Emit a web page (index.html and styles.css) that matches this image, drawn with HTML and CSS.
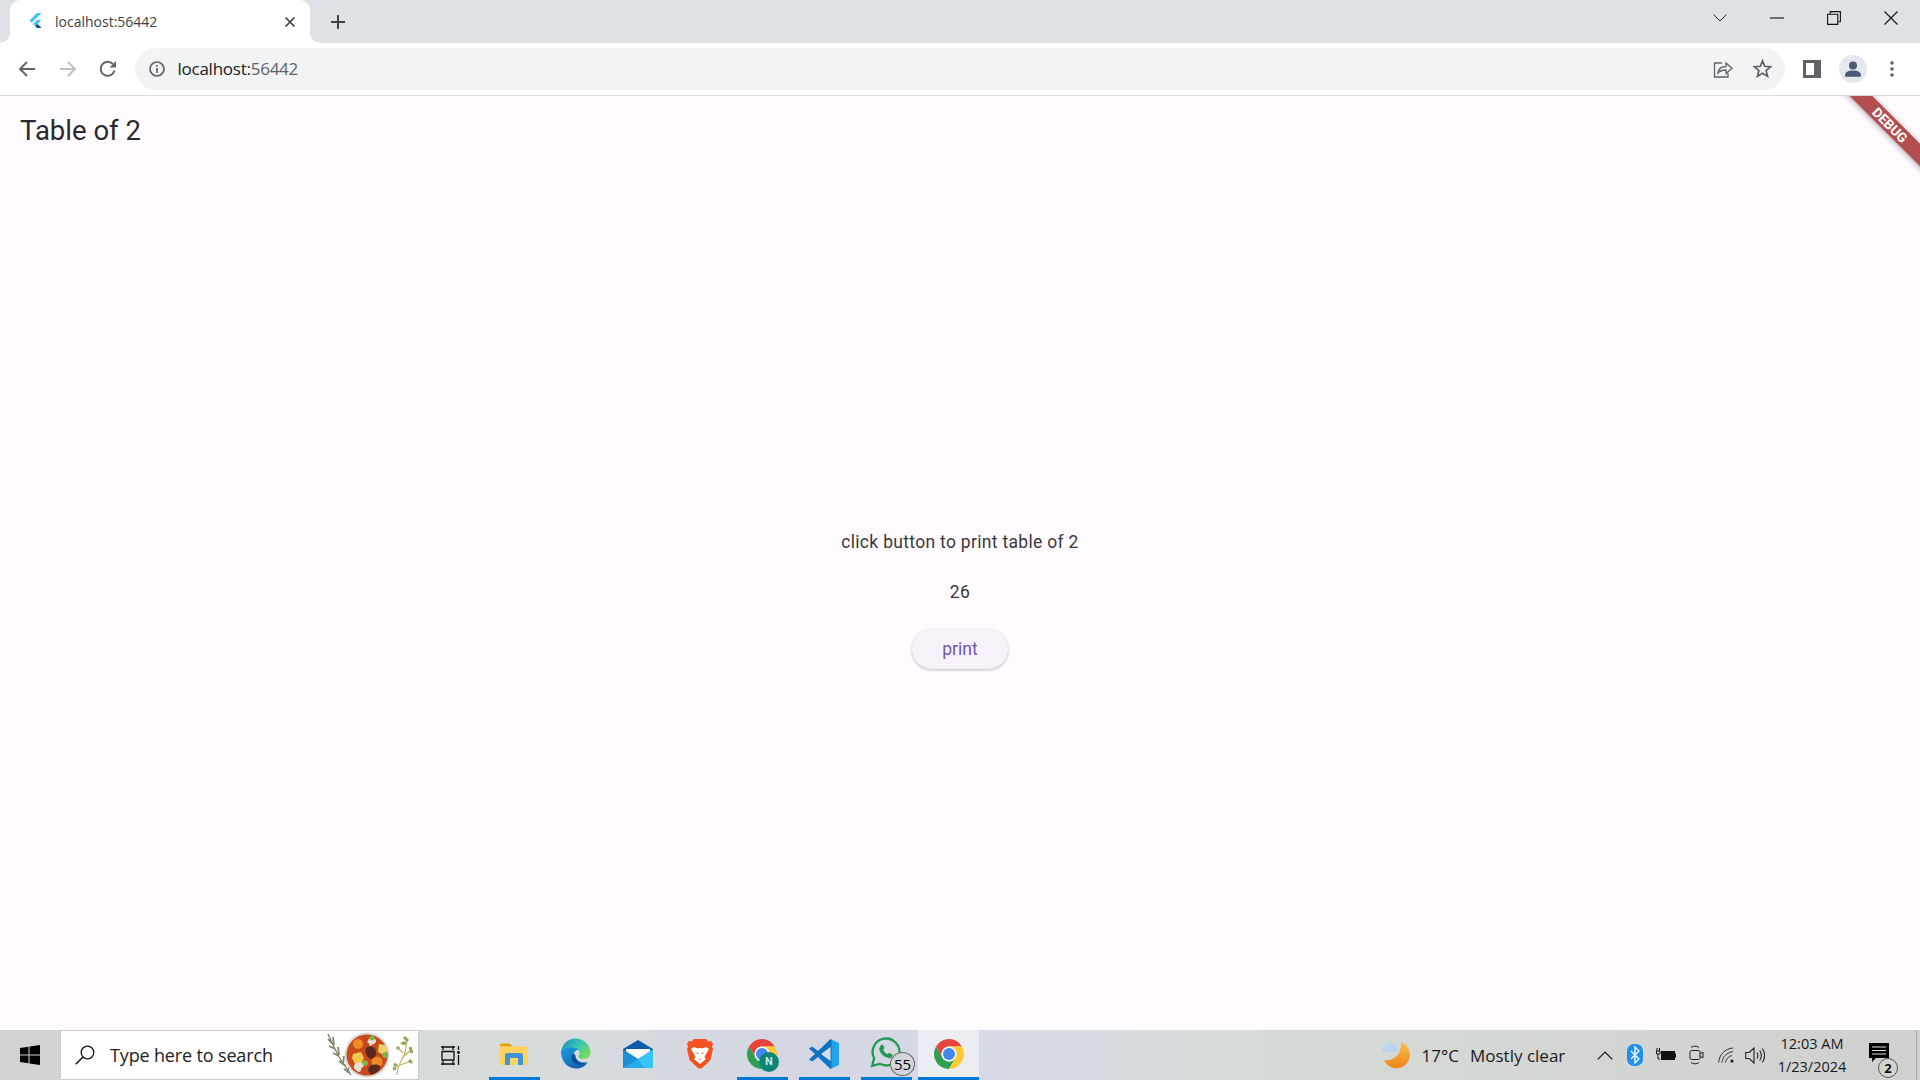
FILE: index.html
```html
<!DOCTYPE html>
<html lang="en">
<head>
<meta charset="utf-8">
<title>localhost:56442</title>
<link rel="stylesheet" href="styles.css">
</head>
<body>
<header class="tabstrip">
  <div class="tab">
    <svg class="favicon" viewBox="0 0 24 24" width="15" height="15"><path fill="#42c5f5" d="M14.3 0 2.3 12 6 15.7 21.7 0z"/><path fill="#42c5f5" d="M14.3 11 7.9 17.5l3.7 3.7 10.1-10.2z"/><path fill="#0a4f94" d="M11.6 21.2 14.3 24h7.4l-6.5-6.5z"/></svg>
    <span class="tab-title">localhost:56442</span>
    <svg class="tab-close" viewBox="0 0 12 12" width="12" height="12"><path d="M1.5 1.5l9 9M10.5 1.5l-9 9" stroke="#3c4043" stroke-width="1.7" fill="none"/></svg>
  </div>
  <svg class="new-tab" viewBox="0 0 16 16" width="16" height="16"><path d="M8 1v14M1 8h14" stroke="#3c4043" stroke-width="2" fill="none"/></svg>
  <div class="strip-space"></div>
  <div class="caption">
    <svg viewBox="0 0 14 8" width="14" height="8"><path d="M.5.5 7 7l6.500-6.500" stroke="#222" fill="none"/></svg>
  </div>
  <div class="caption">
    <svg viewBox="0 0 14 2" width="14" height="2"><path d="M0 1h14" stroke="#111" stroke-width="1.100" fill="none"/></svg>
  </div>
  <div class="caption">
    <svg viewBox="0 0 14 14" width="14" height="14"><path d="M.6 3.200h10.200v10.200H.6zM3.200 3V.6h10.200v10.200H11" stroke="#111" stroke-width="1.100" fill="none"/></svg>
  </div>
  <div class="caption">
    <svg viewBox="0 0 14 14" width="14" height="14"><path d="M.5.5l13 13M13.500.5l-13 13" stroke="#111" stroke-width="1.100" fill="none"/></svg>
  </div>
</header>

<nav class="toolbar">
  <div class="tool">
    <svg viewBox="0 0 18 18" width="18" height="18"><path d="M17 9H2M9 2 2 9l7 7" stroke="#5f6368" stroke-width="1.900" fill="none"/></svg>
  </div>
  <div class="tool">
    <svg viewBox="0 0 18 18" width="18" height="18"><path d="M1 9h15M9 2l7 7-7 7" stroke="#bdc1c6" stroke-width="1.900" fill="none"/></svg>
  </div>
  <div class="tool tool-reload">
    <svg viewBox="0 0 18 18" width="18" height="18"><path d="M15.500 10.500A7 7 0 1 1 14 4.200" stroke="#5f6368" stroke-width="1.900" fill="none"/><path d="M17 1v6.500h-6.500z" fill="#5f6368"/></svg>
  </div>
  <div class="omnibox">
    <svg class="info" viewBox="0 0 16 16" width="16" height="16"><circle cx="8" cy="8" r="7" stroke="#5f6368" stroke-width="1.700" fill="none"/><path d="M8 7v5" stroke="#5f6368" stroke-width="1.700"/><circle cx="8" cy="4.800" r="1" fill="#5f6368"/></svg>
    <span class="url"><span class="url-host">localhost:</span><span class="url-port">56442</span></span>
    <div class="omni-space"></div>
    <div class="omni-btn">
      <svg viewBox="0 0 20 18" width="20" height="18"><path d="M9 3H1.500v14H15v-4" stroke="#5f6368" stroke-width="1.300" fill="none"/><path d="M5 13c.5-4 3.500-6.500 8-6.500V3l6 5.300-6 5.200V10c-3.500 0-6 .8-8 3z" stroke="#5f6368" stroke-width="1.300" fill="none"/></svg>
    </div>
    <div class="omni-btn">
      <svg viewBox="0 0 20 20" width="19" height="19"><path d="M10 2l2.300 5.700 6.200.5-4.700 4 1.500 6L10 15l-5.300 3.200 1.500-6-4.700-4 6.200-.5z" stroke="#5f6368" stroke-width="1.800" fill="none"/></svg>
    </div>
  </div>
  <div class="tool tool-panel">
    <svg viewBox="0 0 18 18" width="18" height="18"><path d="M0 0h18v18H0z" fill="#5f6368"/><path d="M3 3h8v12H3z" fill="#fff"/></svg>
  </div>
  <div class="tool tool-avatar">
    <svg viewBox="0 0 28 28" width="28" height="28"><circle cx="14" cy="14" r="14" fill="#e4e7ec"/><circle cx="14" cy="10.500" r="4" fill="#4a5a74"/><path d="M6 21c0-4 3-5.500 8-5.500s8 1.500 8 5.500c0 .5-.5.800-1 .800H7c-.5 0-1-.3-1-.8z" fill="#4a5a74"/></svg>
  </div>
  <div class="tool tool-menu">
    <svg viewBox="0 0 4 16" width="4" height="16"><circle cx="2" cy="2" r="1.800" fill="#5f6368"/><circle cx="2" cy="8" r="1.800" fill="#5f6368"/><circle cx="2" cy="14" r="1.800" fill="#5f6368"/></svg>
  </div>
</nav>

<main class="app">
  <div class="appbar"><h1 class="app-title">Table of 2</h1></div>
  <section class="center">
    <p class="line">click button to print table of 2</p>
    <p class="line">26</p>
    <button class="print-btn" type="button">print</button>
  </section>
  <div class="debug-clip"><div class="debug-band">DEBUG</div></div>
</main>

<footer class="taskbar">
  <div class="start">
    <svg viewBox="0 0 20 20" width="20" height="20"><path fill="#000" d="M0 3l8.500-1.200v7.700H0zM9.500 1.600 20 0v9.500H9.500zM0 10.500h8.500v7.700L0 17zM9.500 10.500H20V20L9.500 18.400z"/></svg>
  </div>
  <div class="search">
    <svg class="search-icon" viewBox="0 0 20 20" width="20" height="20"><circle cx="12.500" cy="7.500" r="6.300" stroke="#111" stroke-width="1.300" fill="none"/><path d="M8 12 .7 19.300" stroke="#111" stroke-width="1.500"/></svg>
    <span class="search-text">Type here to search</span>
    <div class="search-space"></div>
    <svg class="soup" viewBox="0 0 90 48" width="90" height="48">
      <path d="M3 3 8 14 14 26 26 44" stroke="#8a7a62" stroke-width="1.300" fill="none"/>
      <path d="M3 8l4 4M8 6l1 8M4 15l6 3M13 16l1 8M8 22l6 3M19 25l-1 9M14 30l7 5M24 34l-1 8M19 38l6 4" stroke="#7d8a68" stroke-width="1.800" fill="none"/>
      <circle cx="42" cy="24" r="22.500" fill="#d8d8d8"/>
      <circle cx="42" cy="24" r="20.500" fill="#c9491a"/>
      <circle cx="33" cy="13" r="5" fill="#f08a28"/>
      <circle cx="52" cy="31" r="5.500" fill="#f08a28"/>
      <path d="M44 8c3-2 7-1 7 2s-4 3-5 5c-2 0-2-2-2-3-2 0-2-2 0-4z" fill="#e9e0d0"/>
      <path d="M28 17l8-2 3 6-3 6-6 0-3-6z" fill="#f0c850" transform="translate(0 6)"/>
      <path d="M54 13l6 1 3 5-4 5-6-3z" fill="#f0d068"/>
      <path d="M42 16c4-2 9 0 9 5 1 5-4 8-7 6s-5-8-2-11z" fill="#5a2a20"/>
      <path d="M44 36c3-3 9-3 11-1 1 3-3 7-7 8-4 1-6-4-4-7z" fill="#5a2a20"/>
      <path d="M30 33c3-2 8-2 9 1 0 2-3 2-3 5 0 3-4 2-5 0-2-1-3-4-1-6z" fill="#e9e0d0"/>
      <circle cx="60" cy="24" r="2.800" fill="#7ab648"/>
      <circle cx="40" cy="32" r="2.800" fill="#7ab648"/>
      <circle cx="47" cy="7" r="2.500" fill="#7ab648"/>
      <path d="M72 44 C72 34 78 28 80 22 M80 22l2-12M75 34l9-3M78 26l7-6M78 22l-6-6M74 36l-5-3M80 14l-5-2" stroke="#c0b060" stroke-width="1.200" fill="none"/>
      <path d="M69 33l3 2M72 16l2 2M77 12l4 0M79 6l4 4M85 16l2 6M84 29l3 3M68 37l3 1" stroke="#8ea85a" stroke-width="3" fill="none"/>
    </svg>
  </div>
  <div class="taskview">
    <svg viewBox="0 0 20 19" width="20" height="19"><path d="M3 0v4M13 0v4M0 0M1 1h14M1 18h14M3 15v4M13 15v4M2 5.500h12v8.500H2zM18.500 0v4M18.500 9v10" stroke="#111" stroke-width="1.300" fill="none"/><circle cx="18.500" cy="6.500" r="1.400" fill="#111"/></svg>
  </div>
  <div class="tile">
    <div class="tile-icon">
      <svg viewBox="0 0 28 24" width="28" height="24"><path d="M0 3a1.500 1.500 0 0 1 1.500-1.500h8L13 4.500H0z" fill="#e0a100"/><path d="M0 4.500h26.500a1.500 1.500 0 0 1 1.500 1.500v15.500a1.500 1.500 0 0 1-1.500 1.500H1.500A1.500 1.500 0 0 1 0 21.500z" fill="#ffd25e"/><path d="M7 11h14a2 2 0 0 1 2 2v10h-5v-7h-8v7H5V13a2 2 0 0 1 2-2z" fill="#3f93d6"/></svg>
    </div>
    <div class="underline"></div>
  </div>
  <div class="tile">
    <div class="tile-icon">
      <svg class="edge-icon" viewBox="0 0 32 32" width="31" height="31"><defs><linearGradient id="edgeTop" x1="0" y1="0" x2="1" y2=".6"><stop offset="0" stop-color="#1a8fc8"/><stop offset=".6" stop-color="#3cc6b0"/><stop offset="1" stop-color="#73dc5a"/></linearGradient><linearGradient id="edgeLow" x1="0" y1="0" x2=".7" y2="1"><stop offset="0" stop-color="#1b9ee0"/><stop offset="1" stop-color="#0f5fb0"/></linearGradient></defs><path d="M1 15C2 6 8 .5 16 .5 25 .5 31.500 7.500 31.500 15c0 4-3 6.500-7 6.500-3.500 0-6-1-5.500-3 2-2 1.500-5-.5-6.500C14 9 7 10 4 14z" fill="url(#edgeTop)"/><path d="M1 14c0 9 6 17.500 15.500 17.500 5.500 0 9.500-2.500 12-6-3 1.500-7 2-10 .5-4-2-6-6.500-4.500-10 1-2.500 3-3.500 5-4.500C13 9 4 9 1 14z" fill="url(#edgeLow)"/><path d="M12 17c-1 5 2 10 6.500 10.500 4 .5 7.500-.5 10-2.500-4 .5-8 .5-10-1.500-2-2-3-4.500-3-7z" fill="#0c4e98"/></svg>
    </div>
    <div class="underline hidden-bar"></div>
  </div>
  <div class="tile">
    <div class="tile-icon">
      <svg viewBox="0 0 30 28" width="30" height="28"><path d="M15 0 30 9v2H0V9z" fill="#0f5aa8"/><path d="M3 9h24v7L15 22 3 16z" fill="#fff"/><path d="M0 9.500 15 19 30 9.500V28H0z" fill="#29a9e8"/><path d="M30 9.500 15 19 22 28h8z" fill="#37c5f5"/><path d="M15 19 0 9.500V28z" fill="#1b8ed6"/></svg>
    </div>
    <div class="underline hidden-bar"></div>
  </div>
  <div class="tile">
    <div class="tile-icon">
      <svg viewBox="0 0 26 30" width="26" height="30"><path d="M7 0h12l2.500 2.500L24 2l2 2.500-1 3.500 1 2-2.500 11L15 29c-1 .8-3 .8-4 0l-8.500-8L0 10l1-2L0 4.500 2 2l2.500.5z" fill="#f5501f"/><path d="M7 8l4 1.500 2-.8 2 .8L19 8l3 2-3 5-1.500 3 1.500 2-6 5-6-5 1.500-2L7 15 4 10z" fill="#fff"/><path d="M9 13l2.500 1L11 15.500zM17 13l-2.500 1 .5 1.500zM11 19l2 1 2-1-2 2z" fill="#f5501f"/></svg>
    </div>
    <div class="underline hidden-bar"></div>
  </div>
  <div class="tile">
    <div class="tile-icon">
      <svg viewBox="0 0 48 48" width="36" height="36"><path fill="#e6433a" d="M6.680 14A20 20 0 0 1 41.320 14H24A10 10 0 0 0 15.340 29z"/><path fill="#2f9e4f" d="M6.680 14A20 20 0 0 0 24 44L32.660 29A10 10 0 0 1 15.340 29z"/><path fill="#fcc934" d="M41.320 14A20 20 0 0 1 24 44L32.660 29A10 10 0 0 0 24 14z"/><circle cx="24" cy="24" r="10" fill="#fff"/><circle cx="24" cy="24" r="8" fill="#4285f4"/></svg>
      <span class="n-badge">N</span>
    </div>
    <div class="underline"></div>
  </div>
  <div class="tile">
    <div class="tile-icon">
      <svg viewBox="0 0 30 30" width="30" height="30"><path d="M21.500 0 30 4v22l-8.500 4L21.500 0z" fill="#20a5ee"/><path d="M21.500 0 9 12 3 7.500 0 9.500 6 15 0 20.500l3 2L9 18l12.500 12 1-1V1z" fill="#0b75c4"/><path d="M21.500 8v14L12 15z" fill="#d8dce6"/></svg>
    </div>
    <div class="underline"></div>
  </div>
  <div class="tile">
    <div class="tile-icon">
      <svg class="wa-icon" viewBox="0 0 30 30" width="31" height="31"><path d="M2 28l2-7.500A13 13 0 1 1 9.500 26z" fill="none" stroke="#1f9a55" stroke-width="2.200"/><path d="M10.500 8c1-1 2-.8 2.500.5l.8 2c.2.700-.5 1.400-1 2 .8 1.800 2.300 3.200 4.200 4 .6-.5 1.300-1.200 2-1l2 1c1 .5 1 1.500.3 2.500-1 1.300-2.800 1.800-4.500 1.200-3.500-1.200-6-3.700-7.500-7-.6-1.800-.1-3.600 1.200-4.700z" fill="#1f9a55"/></svg>
      <span class="wa-badge">55</span>
    </div>
    <div class="underline"></div>
  </div>
  <div class="tile tile-active">
    <div class="tile-icon">
      <svg viewBox="0 0 48 48" width="36" height="36"><path fill="#e6433a" d="M6.680 14A20 20 0 0 1 41.320 14H24A10 10 0 0 0 15.340 29z"/><path fill="#2f9e4f" d="M6.680 14A20 20 0 0 0 24 44L32.660 29A10 10 0 0 1 15.340 29z"/><path fill="#fcc934" d="M41.320 14A20 20 0 0 1 24 44L32.660 29A10 10 0 0 0 24 14z"/><circle cx="24" cy="24" r="10" fill="#fff"/><circle cx="24" cy="24" r="8" fill="#4285f4"/></svg>
    </div>
    <div class="underline underline-full"></div>
  </div>
  <div class="task-space"></div>
  <div class="weather">
    <svg viewBox="0 0 30 28" width="30" height="28"><defs><linearGradient id="moon" x1="0" y1="0" x2="0" y2="1"><stop offset="0" stop-color="#fcc24a"/><stop offset="1" stop-color="#ee8418"/></linearGradient></defs><path d="M19 1a13.500 13.500 0 1 1-17 18c8 1.500 18-4 17-18z" fill="url(#moon)"/><path d="M3 11a3.500 3.500 0 0 1 0-7 5 5 0 0 1 9-1 3.500 3.500 0 0 1 3 3.500A3.500 3.500 0 0 1 14 11z" fill="#bcd4ee"/></svg>
    <span class="temp">17°C</span>
    <span class="sky">Mostly clear</span>
  </div>
  <div class="tray">
    <svg class="tray-chevron" viewBox="0 0 16 9" width="16" height="9"><path d="M.7 8.300 8 1l7.300 7.300" stroke="#111" stroke-width="1.200" fill="none"/></svg>
    <svg class="tray-bt" viewBox="0 0 16 22" width="16" height="22"><rect width="16" height="22" rx="7" fill="#1e90f0"/><path d="M4 7l8 8-4 4V3l4 4-8 8" stroke="#fff" stroke-width="1.300" fill="none"/></svg>
    <svg class="tray-batt" viewBox="0 0 20 14" width="20" height="14"><path d="M1 0v3M3.500 0v3M.5 3h3.500v3H.5zM2 6v5h2" stroke="#111" stroke-width="1"  fill="none"/><rect x="5" y="3" width="14" height="9" fill="#111"/><path d="M19 5.500h1v4h-1z" fill="#111"/></svg>
    <svg class="tray-meet" viewBox="0 0 15 20" width="15" height="20"><path d="M2 2.500C4 .7 8 .7 10 2.500M2 17.500c2 1.800 6 1.800 8 0" stroke="#222" fill="none"/><rect x="1" y="5.500" width="10" height="9" rx="1.500" stroke="#222" fill="none"/><path d="M11 9l3-2v6l-3-2" stroke="#222" fill="none"/></svg>
    <svg class="tray-wifi" viewBox="0 0 17 16" width="17" height="16"><path d="M.7 15.500C1 8 7 1.500 15 1M4 15.500C4.500 10 9 5 15 4.700M7.500 15.500C8 12.500 10.500 9 14 8.500" stroke="#333" fill="none"/><circle cx="14" cy="14" r="1.500" fill="#111"/></svg>
    <svg class="tray-vol" viewBox="0 0 20 17" width="20" height="17"><path d="M.7 5.500h3.500L9 1v15l-4.800-4.500H.7zM12 5.500c1.200 2 1.200 4 0 6M14.700 3.500c2 3 2 7 0 10M17.300 1.500c3 4 3 10 0 14" stroke="#222" stroke-width="1.100" fill="none"/></svg>
  </div>
  <div class="clock">
    <span>12:03 AM</span>
    <span>1/23/2024</span>
  </div>
  <div class="notify">
    <svg viewBox="0 0 20 20" width="20" height="20"><path d="M0 0h20v15H7l-4 4v-4H0z" fill="#000"/><path d="M3 4h14M3 7.500h14M3 11h14" stroke="#ddd" stroke-width="1"/></svg>
    <span class="notify-badge">2</span>
  </div>
  <div class="show-desktop"></div>
</footer>
</body>
</html>
```

FILE: styles.css
```css
* { box-sizing: border-box; }
html, body { height: 100%; }
body {
  margin: 0;
  display: flex;
  flex-direction: column;
  height: 100vh;
  overflow: hidden;
  font-family: "Roboto", "Liberation Sans", sans-serif;
  background: #fffbfe;
}
svg { display: block; flex: none; }

/* tab strip */
.tabstrip {
  height: 43px;
  flex: none;
  display: flex;
  align-items: stretch;
  padding: 0 1px 0 10px;
  background: #dee1e6;
}
.tab {
  position: relative;
  width: 300px;
  display: flex;
  align-items: center;
  padding: 0 14px 0 18px;
  background: #fff;
  border-radius: 10px 10px 0 0;
}
.tab::before, .tab::after {
  content: "";
  position: absolute;
  bottom: 0;
  width: 10px;
  height: 10px;
}
.tab::before { left: -10px; background: radial-gradient(circle at 0 0, #dee1e6 9.500px, #fff 10px); }
.tab::after { right: -10px; background: radial-gradient(circle at 100% 0, #dee1e6 9.500px, #fff 10px); }
.favicon { margin-top: -2px; }
.tab-title {
  margin-left: 12px;
  flex: 1;
  font: 14px "Open Sans", sans-serif;
  letter-spacing: 0;
  color: #3c4043;
}
.new-tab { align-self: center; margin-left: 20px; }
.strip-space { flex: 1; }
.caption {
  width: 57px;
  height: 36px;
  display: flex;
  align-items: center;
  justify-content: center;
}

/* toolbar */
.toolbar {
  height: 53px;
  flex: none;
  display: flex;
  align-items: center;
  padding: 0 8px 1px 7px;
  background: #fff;
  border-bottom: 1px solid #dadce0;
}
.tool {
  width: 40.500px;
  height: 42px;
  display: flex;
  align-items: center;
  justify-content: center;
}
.tool-reload { margin-right: 6px; }
.tool-panel { margin-left: 7px; }
.tool-avatar { margin-left: 1px; }
.tool-menu { margin-left: -2px; }
.omnibox {
  flex: 1;
  height: 42px;
  display: flex;
  align-items: center;
  padding: 0 2px 0 14px;
  border-radius: 21px;
  background: #f1f3f4;
}
.url {
  margin-left: 13px;
  font: 17px "Open Sans", sans-serif;
  letter-spacing: -.25px;
}
.url-host { color: #202124; }
.url-port { color: #5f6368; }
.omni-space { flex: 1; }
.omni-btn {
  width: 40px;
  display: flex;
  justify-content: center;
}

/* flutter app */
.app {
  position: relative;
  flex: 1;
  min-height: 0;
  display: flex;
  flex-direction: column;
  background: #fffbfe;
}
.appbar {
  height: 72px;
  flex: none;
  padding: 16px 20px 0;
}
.app-title {
  margin: 0;
  font: 400 27.500px/38px "Roboto", sans-serif;
  color: #2b292e;
}
.center {
  flex: 1;
  display: flex;
  flex-direction: column;
  align-items: center;
  justify-content: center;
  gap: 24px;
}
.line {
  margin: 0;
  font: 400 17.500px/26px "Roboto", sans-serif;
  letter-spacing: .31px;
  color: #3a383e;
}
.print-btn {
  width: 96px;
  height: 40px;
  border: 0;
  border-radius: 20px;
  font: 400 17.500px "Roboto", sans-serif;
  color: #7058ad;
  background: #f7f2fa;
  box-shadow: 0 1px 3px rgba(0, 0, 0, .28);
}
.debug-clip {
  position: absolute;
  top: 0;
  right: 0;
  width: 100px;
  height: 100px;
  overflow: hidden;
}
.debug-band {
  position: absolute;
  left: 10px;
  top: 21px;
  width: 120px;
  height: 16px;
  transform: rotate(45deg);
  text-align: center;
  font: 700 13.500px/16px "Roboto", sans-serif;
  color: #fff;
  background: #b24d50;
  box-shadow: 0 1px 6px rgba(0, 0, 0, .35);
}

/* taskbar */
.taskbar {
  position: relative;
  height: 50px;
  flex: none;
  display: flex;
  align-items: stretch;
  background: linear-gradient(90deg, #d1d3d3 0, #d6dbd8 420px, #d7dbdc 560px, #d4d7e3 800px, #d7dae4 1000px, #d6dad6 1300px, #cfd1cf 1920px);
  font-family: "Open Sans", sans-serif;
  color: #111;
}
.start {
  width: 60px;
  display: flex;
  align-items: center;
  justify-content: center;
}
.search {
  width: 359px;
  display: flex;
  align-items: center;
  padding: 0 3px 0 14px;
  background: #fff;
  border: 1px solid #cbcdcd;
}
.search-text {
  margin-left: 15px;
  font-size: 18px;
  letter-spacing: -.15px;
  color: #222;
}
.search-space { flex: 1; }
.taskview {
  width: 64px;
  padding-right: 2px;
  display: flex;
  align-items: center;
  justify-content: center;
}
.tile {
  width: 62px;
  display: flex;
  flex-direction: column;
  align-items: center;
}
.tile-active { background: #ebedf3; width: 61px; margin-left: 1px; }
.tile-icon {
  position: relative;
  flex: 1;
  display: flex;
  align-items: center;
  justify-content: center;
  width: 100%;
}
.underline { width: 51px; height: 3px; background: #0078d7; }
.underline-full { width: 100%; }
.hidden-bar { background: transparent; }
.edge-icon { margin-left: -2px; }
.wa-icon { margin: -2px 0 0 -2px; }
.n-badge {
  position: absolute;
  left: 28px;
  top: 22px;
  width: 20px;
  height: 20px;
  border-radius: 50%;
  background: #0f8577;
  color: #cfe9e2;
  font: 700 11px/20px "Roboto", sans-serif;
  text-align: center;
}
.wa-badge {
  position: absolute;
  left: 35px;
  top: 22px;
  width: 25px;
  height: 24px;
  border-radius: 50%;
  border: 1px solid #666;
  background: #d4d6dc;
  color: #000;
  font: 15px/22px "Open Sans", sans-serif;
  text-align: center;
}
.task-space { flex: 1; }
.weather {
  display: flex;
  align-items: center;
  font-size: 17px;
  color: #1a1a1a;
}
.temp { margin-left: 10px; }
.sky { margin-left: 11px; width: 96px; white-space: nowrap; letter-spacing: 0; }
.tray {
  display: flex;
  align-items: center;
  margin-left: 31px;
}
.tray-bt { margin-left: 14px; }
.tray-batt { margin-left: 13px; }
.tray-meet { margin-left: 13px; }
.tray-wifi { margin-left: 14px; }
.tray-vol { margin-left: 10px; }
.clock {
  width: 90px;
  margin-left: 2px;
  display: flex;
  flex-direction: column;
  align-items: center;
  justify-content: center;
  gap: 3px;
  font-size: 14.500px;
  line-height: 20px;
  color: #1a1a1a;
}
.notify {
  position: relative;
  width: 59px;
  display: flex;
  align-items: center;
  padding: 0 0 4px 12px;
}
.notify-badge {
  position: absolute;
  left: 21px;
  top: 28px;
  width: 20px;
  height: 20px;
  border-radius: 50%;
  border: 1px solid #555;
  background: #d2d4d2;
  font: 700 13px/18px "Open Sans", sans-serif;
  text-align: center;
}
.show-desktop { width: 4px; border-left: 1px solid #a8a8a8; }
```
